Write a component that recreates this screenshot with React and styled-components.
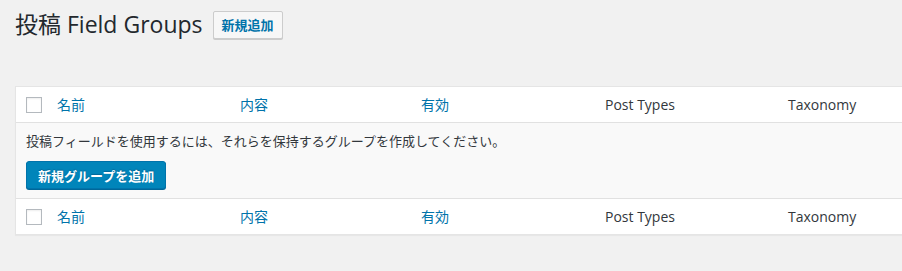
import React from "react";
import styled, { createGlobalStyle } from "styled-components";

const Global = createGlobalStyle`
  html, body { margin: 0; padding: 0; background: #f1f1f1; overflow: hidden; }
  body {
    font-family: "Open Sans", "Noto Sans CJK JP", sans-serif;
    font-size: 13px;
    color: #444;
  }
`;

const Wrap = styled.div`
  padding: 10px 0 0 15px;
  overflow: hidden;
  height: 261px;
`;

const TitleRow = styled.div`
  display: flex;
  align-items: center;
  gap: 10px;
  height: 29px;
`;

const Title = styled.h1`
  margin: 0;
  font-size: 23px;
  font-weight: 400;
  line-height: 29px;
  color: #23282d;
`;

const AddButton = styled.a`
  display: inline-flex;
  align-items: center;
  box-sizing: border-box;
  height: 28px;
  padding: 0 8px;
  border: 1px solid #ccc;
  border-radius: 2px;
  background: #f7f7f7;
  color: #0073aa;
  font-size: 13px;
  font-weight: 600;
  text-decoration: none;
  box-shadow: 0 1px 0 #ccc;
`;

const Table = styled.div`
  margin: 47px 0 0 0;
  width: 960px;
  background: #fff;
  border: 1px solid #e5e5e5;
  box-shadow: 0 1px 1px rgba(0, 0, 0, 0.04);
`;

const HeadRow = styled.div`
  display: grid;
  grid-template-columns: 31px 183px 181px 184px 183px 183px;
  align-items: center;
  height: 35px;
  border-bottom: ${(p) => (p.$top ? "1px solid #e1e1e1" : "none")};
  border-top: ${(p) => (p.$bottom ? "1px solid #e1e1e1" : "none")};
`;

const CheckCell = styled.div`
  display: flex;
  align-items: center;
  padding-left: 10px;
`;

const Check = styled.span`
  display: block;
  box-sizing: border-box;
  width: 16px;
  height: 16px;
  border: 1px solid #b4b9be;
  background: #fff;
  box-shadow: inset 0 1px 2px rgba(0, 0, 0, 0.07);
`;

const HeadCell = styled.div`
  padding: 0 10px;
  font-size: 14px;
  color: ${(p) => (p.$link ? "#0073aa" : "#32373c")};
  line-height: 20px;
`;

const EmptyRow = styled.div`
  background: #f9f9f9;
  padding: 9px 10px 6px;
  height: 60px;
`;

const Message = styled.p`
  margin: 0 0 11px;
  font-size: 13px;
  line-height: 18px;
  color: #32373c;
`;

const PrimaryButton = styled.a`
  display: inline-flex;
  align-items: center;
  box-sizing: border-box;
  height: 28px;
  padding: 0 11px;
  background: #0085ba;
  border: 1px solid #0073aa;
  border-radius: 3px;
  box-shadow: 0 1px 0 #006799;
  color: #fff;
  font-size: 13px;
  font-weight: 600;
  text-decoration: none;
  text-shadow: 0 -1px 1px #006799;
`;

const cols = [
  { label: "名前", link: true },
  { label: "内容", link: true },
  { label: "有効", link: true },
  { label: "Post Types", link: false },
  { label: "Taxonomy", link: false },
];

function Header({ top, bottom }) {
  return (
    <HeadRow $top={top} $bottom={bottom}>
      <CheckCell>
        <Check />
      </CheckCell>
      {cols.map((c) => (
        <HeadCell key={c.label} $link={c.link}>
          {c.label}
        </HeadCell>
      ))}
    </HeadRow>
  );
}

export default function App() {
  return (
    <>
      <Global />
      <Wrap>
        <TitleRow>
          <Title>投稿 Field Groups</Title>
          <AddButton href="#">新規追加</AddButton>
        </TitleRow>
        <Table>
          <Header top />
          <EmptyRow>
            <Message>投稿フィールドを使用するには、それらを保持するグループを作成してください。</Message>
            <PrimaryButton href="#">新規グループを追加</PrimaryButton>
          </EmptyRow>
          <Header bottom />
        </Table>
      </Wrap>
    </>
  );
}
